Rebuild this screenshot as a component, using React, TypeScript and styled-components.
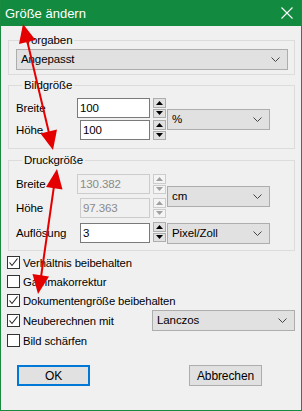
import styled, { createGlobalStyle } from 'styled-components';

const GlobalStyle = createGlobalStyle`
  html, body {
    margin: 0;
    padding: 0;
    background: #f0f0f0;
  }
  * {
    box-sizing: border-box;
  }
`;

const font = `'Liberation Sans', Arial, sans-serif`;

const Chevron = () => (
  <svg width='9' height='5' viewBox='0 0 9 5'>
    <path d='M0.5 0.5 L4.5 4.5 L8.5 0.5' fill='none' stroke='#444' strokeWidth='1' />
  </svg>
);

const Combo = ({ value, width }: { value: string; width: number }) => (
  <ComboBox style={{ width }}>
    <span>{value}</span>
    <Chevron />
  </ComboBox>
);

const Spinner = ({ disabled }: { disabled?: boolean }) => (
  <SpinBox>
    <SpinButton disabled={disabled}>
      <svg width='7' height='4' viewBox='0 0 7 4'>
        <path d='M3.5 0 L7 4 L0 4 Z' />
      </svg>
    </SpinButton>
    <SpinButton disabled={disabled}>
      <svg width='7' height='4' viewBox='0 0 7 4'>
        <path d='M0 0 L7 0 L3.5 4 Z' />
      </svg>
    </SpinButton>
  </SpinBox>
);

const Check = ({ checked, label }: { checked?: boolean; label: string }) => (
  <CheckLabel>
    <CheckBox>
      {checked && (
        <svg width='11' height='11' viewBox='0 0 11 11'>
          <path d='M1.5 5.5 L4 8.5 L9.5 1.5' fill='none' stroke='#222' strokeWidth='1.1' />
        </svg>
      )}
    </CheckBox>
    {label}
  </CheckLabel>
);

const Arrows = () => (
  <Overlay width='302' height='411' viewBox='0 0 302 411'>
    <g fill='#e50000' stroke='#e50000'>
      <line x1='26' y1='40' x2='48' y2='133' strokeWidth='2' />
      <polygon points='22,24 34.5,40 18,44' stroke='none' />
      <polygon points='52,150 56,129.5 39.5,133.5' stroke='none' />
      <line x1='53' y1='186' x2='40' y2='277' strokeWidth='2' />
      <polygon points='56,169 61.5,189.5 45,187' stroke='none' />
      <polygon points='37,294 48,276.5 31.5,274' stroke='none' />
    </g>
  </Overlay>
);

const App = () => {
  return (
    <>
      <GlobalStyle />
      <Window>
        <TitleBar>
          <span>Größe ändern</span>
          <svg width='12' height='12' viewBox='0 0 12 12'>
            <path d='M0.5 0.5 L11.5 11.5 M11.5 0.5 L0.5 11.5' stroke='#fff' strokeWidth='1.1' />
          </svg>
        </TitleBar>
        <Body>
          <Group>
            <legend>Vorgaben</legend>
            <Combo value='Angepasst' width={272} />
          </Group>

          <Group pad='6px 0 8px'>
            <legend>Bildgröße</legend>
            <SizeGrid>
              <FieldLabel>Breite</FieldLabel>
              <TextInput>100</TextInput>
              <Spinner />
              <ComboCell rows='1 / 3'>
                <Combo value='%' width={103} />
              </ComboCell>
              <FieldLabel>Höhe</FieldLabel>
              <TextInput>100</TextInput>
              <Spinner />
            </SizeGrid>
          </Group>

          <Group pad='7px 0 8px' top={4}>
            <legend>Druckgröße</legend>
            <SizeGrid rowGap={4}>
              <FieldLabel>Breite</FieldLabel>
              <TextInput disabled>130.382</TextInput>
              <Spinner disabled />
              <ComboCell rows='1 / 3'>
                <Combo value='cm' width={103} />
              </ComboCell>
              <FieldLabel>Höhe</FieldLabel>
              <TextInput disabled>97.363</TextInput>
              <Spinner disabled />
              <FieldLabel extra={2}>Auflösung</FieldLabel>
              <TextInput extra={2}>3</TextInput>
              <Spinner />
              <ComboCell rows='3 / 4' extra={2}>
                <Combo value='Pixel/Zoll' width={103} />
              </ComboCell>
            </SizeGrid>
          </Group>

          <Options>
            <Check checked label='Verhältnis beibehalten' />
            <Check label='Gammakorrektur' />
            <Check checked label='Dokumentengröße beibehalten' />
            <OptionRow>
              <Check checked label='Neuberechnen mit' />
              <Combo value='Lanczos' width={143} />
            </OptionRow>
            <Check label='Bild schärfen' />
          </Options>

          <Buttons>
            <Button primary>OK</Button>
            <Button>Abbrechen</Button>
          </Buttons>
        </Body>
        <Arrows />
      </Window>
    </>
  );
};

const Window = styled.div`
  position: relative;
  width: 302px;
  height: 411px;
  background: #f0f0f0;
  border: 1px solid #1a8a40;
  border-top: none;
  font-family: ${font};
  font-size: 11px;
  letter-spacing: -0.1px;
  color: #000;
  overflow: hidden;
`;

const TitleBar = styled.div`
  height: 26px;
  margin: 0 -1px;
  background: #128a3f;
  color: #fff;
  display: flex;
  align-items: center;
  justify-content: space-between;
  padding: 0 9px 0 5px;
  font-size: 13px;
  letter-spacing: 0;
`;

const Body = styled.div`
  padding: 7px 6px 0 7px;
  display: flex;
  flex-direction: column;
`;

const Group = styled.fieldset<{ pad?: string; top?: number }>`
  margin: ${({ top }) => top ?? 3}px 0 0;
  padding: ${({ pad }) => pad ?? '2px 0 4px'} 7px;
  padding-right: 6px;
  border: 1px solid #dcdcdc;
  min-width: 0;

  &:first-child {
    margin-top: 0;
  }

  legend {
    padding: 0 2px;
    margin-left: 6px;
    line-height: 14px;
    font-size: 11.5px;
    color: #000;
  }
`;

const SizeGrid = styled.div<{ rowGap?: number }>`
  display: grid;
  grid-template-columns: 61px 73px 13px 103px;
  grid-auto-rows: 20px;
  row-gap: ${({ rowGap }) => rowGap ?? 2}px;
  align-items: center;

  & > :nth-child(3n) {
    margin-left: 3px;
  }
`;

const FieldLabel = styled.div<{ extra?: number }>`
  margin-top: ${({ extra }) => extra ?? 0}px;
  line-height: 20px;
  font-size: 11.5px;
`;

const TextInput = styled.div<{ disabled?: boolean; extra?: number }>`
  height: 20px;
  margin-top: ${({ extra }) => extra ?? 0}px;
  border: 1px solid ${({ disabled }) => (disabled ? '#cccccc' : '#7a7a7a')};
  background: ${({ disabled }) => (disabled ? '#f0f0f0' : '#fff')};
  color: ${({ disabled }) => (disabled ? '#8a8a8a' : '#000')};
  padding: 0 2px;
  line-height: 18px;
  font-size: 11.5px;
`;

const SpinBox = styled.div`
  display: flex;
  flex-direction: column;
  gap: 1px;
  width: 13px;
  height: 20px;
  margin-left: 3px;
`;

const SpinButton = styled.div<{ disabled?: boolean }>`
  flex: 1;
  display: flex;
  align-items: center;
  justify-content: center;
  border: 1px solid ${({ disabled }) => (disabled ? '#cccccc' : '#adadad')};
  background: ${({ disabled }) => (disabled ? '#f4f4f4' : '#e1e1e1')};

  svg {
    fill: ${({ disabled }) => (disabled ? '#a0a0a0' : '#000')};
  }
`;

const ComboCell = styled.div<{ rows: string; extra?: number }>`
  grid-row: ${({ rows }) => rows};
  grid-column: 4;
  margin-left: 4px;
  margin-top: ${({ extra }) => extra ?? 0}px;
`;

const ComboBox = styled.div`
  height: 21px;
  border: 1px solid #adadad;
  background: #e1e1e1;
  display: flex;
  align-items: center;
  justify-content: space-between;
  padding: 0 7px 0 4px;
  line-height: 19px;
  font-size: 11.5px;
  flex-shrink: 0;
`;

const Options = styled.div`
  display: flex;
  flex-direction: column;
  margin-top: 2px;
`;

const OptionRow = styled.div`
  display: flex;
  align-items: center;
  justify-content: space-between;
  height: 21px;
`;

const CheckLabel = styled.label`
  display: flex;
  align-items: center;
  gap: 3px;
  height: 19px;
  margin-left: -1px;
  font-size: 11.3px;
`;

const CheckBox = styled.span`
  width: 13px;
  height: 13px;
  border: 1px solid #333;
  background: #fff;
  display: flex;
  align-items: center;
  justify-content: center;
`;

const Buttons = styled.div`
  display: flex;
  gap: 99px;
  margin-top: 15px;
  padding-left: 9px;
`;

const Button = styled.div<{ primary?: boolean }>`
  width: 73px;
  height: 21px;
  display: flex;
  align-items: center;
  justify-content: center;
  background: #e1e1e1;
  font-size: 12px;
  border: ${({ primary }) => (primary ? '2px solid #0078d7' : '1px solid #adadad')};
`;

const Overlay = styled.svg`
  position: absolute;
  top: 0;
  left: 0;
  pointer-events: none;
`;

export default App;
